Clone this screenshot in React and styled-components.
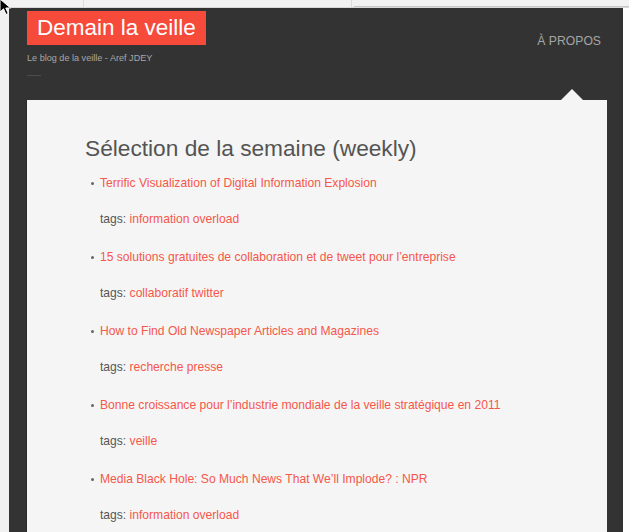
import React from 'react';
import styled, { createGlobalStyle } from 'styled-components';

const GlobalStyle = createGlobalStyle`
  html, body {
    margin: 0;
    padding: 0;
    background: #ffffff;
    font-family: 'Liberation Sans', Arial, sans-serif;
    overflow: hidden;
  }
`;

const posts = [
  { title: 'Terrific Visualization of Digital Information Explosion', tags: 'information overload' },
  { title: '15 solutions gratuites de collaboration et de tweet pour l’entreprise', tags: 'collaboratif twitter' },
  { title: 'How to Find Old Newspaper Articles and Magazines', tags: 'recherche presse' },
  { title: 'Bonne croissance pour l’industrie mondiale de la veille stratégique en 2011', tags: 'veille' },
  { title: 'Media Black Hole: So Much News That We’ll Implode? : NPR', tags: 'information overload' },
];

const App = () => (
  <>
    <GlobalStyle />
    <Page>
      <Chrome>
        <ChromeTab $width={83} />
        <ChromeTab $width={267} />
        <ChromeField />
      </Chrome>
      <Frame>
        <Gutter />
        <Main>
          <Header>
            <Brand>
              <Logo>Demain la veille</Logo>
              <Tagline>Le blog de la veille - Aref JDEY</Tagline>
              <Rule />
            </Brand>
            <Nav>À PROPOS</Nav>
          </Header>
          <Card>
            <Title>Sélection de la semaine (weekly)</Title>
            <List>
              {posts.map((p) => (
                <Item key={p.title}>
                  <PostLink href='#'>{p.title}</PostLink>
                  <Tags>
                    tags: <TagLink href='#'>{p.tags}</TagLink>
                  </Tags>
                </Item>
              ))}
            </List>
          </Card>
        </Main>
        <Side />
      </Frame>
      <Cursor width='14' height='18' viewBox='0 0 14 18'>
        <path d='M1 1 L1 14 L4.5 10.8 L7 16.5 L9.2 15.5 L6.8 10 L11.5 10 Z' fill='#000' stroke='#fff' strokeWidth='1' />
      </Cursor>
    </Page>
  </>
);

const Page = styled.div`
  position: relative;
  width: 629px;
  height: 532px;
  overflow: hidden;
`;

const Chrome = styled.div`
  display: flex;
  height: 7px;
  background: #f2f2f2;
  border-bottom: 1px solid #d8d8d8;
`;

const ChromeTab = styled.div`
  width: ${(p) => p.$width}px;
  border-right: 1px solid #dcdcdc;
`;

const ChromeField = styled.div`
  flex: 1;
  border-bottom: 1px solid #c8c8c8;
  margin-left: 2px;
`;

const Frame = styled.div`
  display: flex;
  height: 524px;
`;

const Gutter = styled.div`
  width: 9px;
  background: #f1f1f1;
`;

const Side = styled.div`
  flex: 1;
  background: #ffffff;
`;

const Main = styled.div`
  width: 614px;
  background: #333333;
  padding: 3px 16px 0 18px;
  box-sizing: border-box;
`;

const Header = styled.div`
  display: flex;
  justify-content: space-between;
  align-items: flex-start;
  height: 89px;
`;

const Brand = styled.div`
  display: flex;
  flex-direction: column;
  align-items: flex-start;
`;

const Logo = styled.div`
  background: #f64a3b;
  color: #ffffff;
  font-size: 22.5px;
  line-height: 34px;
  height: 34px;
  padding: 0 10px;
`;

const Tagline = styled.div`
  margin-top: 8px;
  font-size: 9.1px;
  color: #a8a8a8;
`;

const Rule = styled.div`
  width: 14px;
  height: 1px;
  margin-top: 12px;
  background: #4c4c4c;
`;

const Nav = styled.a`
  margin-top: 23px;
  margin-right: 6px;
  font-size: 12.2px;
  color: #a5a5a5;
  text-decoration: none;
`;

const Card = styled.div`
  position: relative;
  width: 580px;
  min-height: 440px;
  background: #f5f5f5;
  box-shadow: -1px 0 0 #2a2a2a;
  padding: 35px 0 0 58px;
  box-sizing: border-box;

  &::before {
    content: '';
    position: absolute;
    top: -11px;
    left: 534px;
    border-left: 11px solid transparent;
    border-right: 11px solid transparent;
    border-bottom: 11px solid #f5f5f5;
  }
`;

const Title = styled.h2`
  margin: 0;
  font-weight: normal;
  font-size: 22.7px;
  line-height: 26px;
  color: #545454;
`;

const List = styled.ul`
  margin: 13px 0 0;
  padding: 0 0 0 15px;
  list-style: none;
`;

const Item = styled.li`
  position: relative;
  margin-bottom: 20px;
  font-size: 12.1px;
  line-height: 18px;

  &::before {
    content: '';
    position: absolute;
    left: -9px;
    top: 8px;
    width: 3px;
    height: 3px;
    border-radius: 50%;
    background: #666666;
  }
`;

const PostLink = styled.a`
  color: #f5574a;
  text-decoration: none;
`;

const Tags = styled.div`
  margin-top: 18px;
  color: #555555;
`;

const TagLink = styled.a`
  color: #f5574a;
  text-decoration: none;
`;

const Cursor = styled.svg`
  position: absolute;
  top: -2px;
  left: -1px;
`;

export default App;
